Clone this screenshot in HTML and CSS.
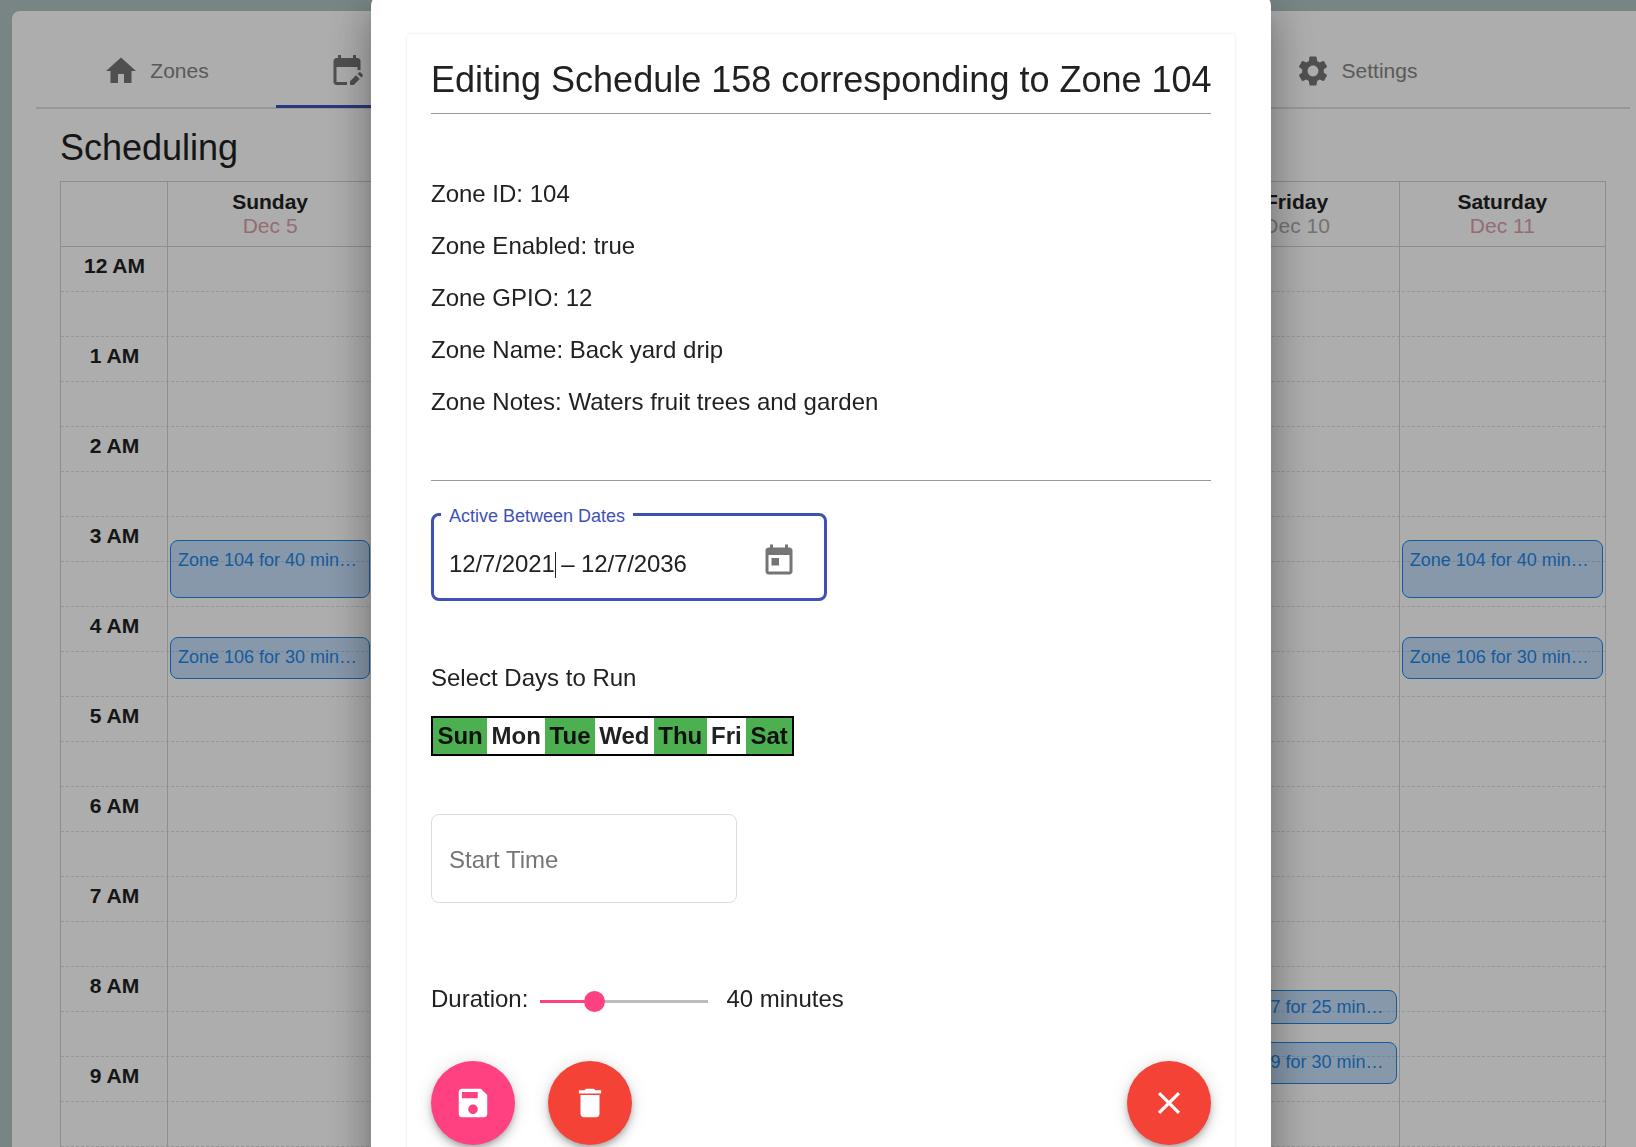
FILE: index.html
```html
<!DOCTYPE html>
<html lang="en">
  <head>
    <meta charset="UTF-8" />
    <meta name="viewport" content="width=device-width, initial-scale=1.0" />
    <title>Scheduling</title>
    <link rel="stylesheet" href="styles.css">
  </head>
  <body>
    <div class="page-card">
      <nav class="tabs">
        <a class="tab">
          <svg class="tab-icon" viewBox="0 0 24 24"><path d="M10 20v-6h4v6h5v-8h3L12 3 2 12h3v8z"/></svg>
          <span>Zones</span>
        </a>
        <a class="tab tab-active">
          <svg class="tab-icon" viewBox="0 0 24 24"><path d="M5 10h14v2h2V6c0-1.1-.9-2-2-2h-1V2h-2v2H8V2H6v2H5c-1.1 0-2 .9-2 2v14c0 1.1.9 2 2 2h7v-2H5V10zM22.29 14.84l-1.06-1.06c-.39-.39-1.02-.39-1.41 0l-.78.78 2.47 2.47.78-.78c.39-.39.39-1.02 0-1.41zM14 19.53V22h2.47l4-4-2.47-2.47-4 4z"/></svg>
          <span>Schedule</span>
        </a>
        <div class="tab-gap"></div>
        <a class="tab">
          <svg class="tab-icon" viewBox="0 0 24 24"><path d="M19.14 12.94c.04-.3.06-.61.06-.94 0-.32-.02-.64-.07-.94l2.03-1.58c.18-.14.23-.41.12-.61l-1.92-3.32c-.12-.22-.37-.29-.59-.22l-2.39.96c-.5-.38-1.03-.7-1.62-.94l-.36-2.54c-.04-.24-.24-.41-.48-.41h-3.84c-.24 0-.43.17-.47.41l-.36 2.54c-.59.24-1.13.57-1.62.94l-2.39-.96c-.22-.08-.47 0-.59.22L2.74 8.87c-.12.21-.08.47.12.61l2.03 1.58c-.05.3-.09.63-.09.94s.02.64.07.94l-2.03 1.58c-.18.14-.23.41-.12.61l1.92 3.32c.12.22.37.29.59.22l2.39-.96c.5.38 1.03.7 1.62.94l.36 2.54c.05.24.24.41.48.41h3.84c.24 0 .44-.17.47-.41l.36-2.54c.59-.24 1.13-.56 1.62-.94l2.39.96c.22.08.47 0 .59-.22l1.92-3.32c.12-.22.07-.47-.12-.61l-2.01-1.58zM12 15.6c-1.98 0-3.6-1.62-3.6-3.6s1.62-3.6 3.6-3.6 3.6 1.62 3.6 3.6-1.62 3.6-3.6 3.6z"/></svg>
          <span>Settings</span>
        </a>
      </nav>

      <section class="schedule">
        <h1 class="schedule-title">Scheduling</h1>
        <div class="calendar">
          <div class="cal-head">
            <div class="cal-head-cell"></div>
            <div class="cal-head-cell"><b>Sunday</b><span class="weekend">Dec 5</span></div>
            <div class="cal-head-cell"><b>Monday</b><span>Dec 6</span></div>
            <div class="cal-head-cell"><b>Tuesday</b><span>Dec 7</span></div>
            <div class="cal-head-cell"><b>Wednesday</b><span>Dec 8</span></div>
            <div class="cal-head-cell"><b>Thursday</b><span>Dec 9</span></div>
            <div class="cal-head-cell"><b>Friday</b><span>Dec 10</span></div>
            <div class="cal-head-cell"><b>Saturday</b><span class="weekend">Dec 11</span></div>
          </div>
          <div class="cal-body">
            <div class="slot">12 AM</div><div class="slot"></div>
            <div class="slot">1 AM</div><div class="slot"></div>
            <div class="slot">2 AM</div><div class="slot"></div>
            <div class="slot">3 AM</div><div class="slot"></div>
            <div class="slot">4 AM</div><div class="slot"></div>
            <div class="slot">5 AM</div><div class="slot"></div>
            <div class="slot">6 AM</div><div class="slot"></div>
            <div class="slot">7 AM</div><div class="slot"></div>
            <div class="slot">8 AM</div><div class="slot"></div>
            <div class="slot">9 AM</div><div class="slot"></div>
            <div class="cal-cols">
              <div class="cal-col"></div>
              <div class="cal-col">
                <div class="event event-a">Zone 104 for 40 minutes</div>
                <div class="event event-b">Zone 106 for 30 minutes</div>
              </div>
              <div class="cal-col"></div>
              <div class="cal-col"></div>
              <div class="cal-col"></div>
              <div class="cal-col"></div>
              <div class="cal-col">
                <div class="event event-c">Zone 107 for 25 minutes</div>
                <div class="event event-d">Zone 109 for 30 minutes</div>
              </div>
              <div class="cal-col">
                <div class="event event-a">Zone 104 for 40 minutes</div>
                <div class="event event-b">Zone 106 for 30 minutes</div>
              </div>
            </div>
          </div>
        </div>
      </section>
    </div>

    <div class="backdrop"></div>

    <div class="modal">
      <div class="modal-paper">
        <h2 class="modal-title">Editing Schedule 158 corresponding to Zone 104</h2>

        <div class="zone-info">
          <p>Zone ID: 104</p>
          <p>Zone Enabled: true</p>
          <p>Zone GPIO: 12</p>
          <p>Zone Name: Back yard drip</p>
          <p>Zone Notes: Waters fruit trees and garden</p>
        </div>
        <hr class="rule" />

        <div class="date-field">
          <label class="date-label">Active Between Dates</label>
          <div class="date-value">12/7/2021<i class="caret"></i> – 12/7/2036</div>
          <svg class="date-icon" viewBox="0 0 24 24"><path d="M19 3h-1V1h-2v2H8V1H6v2H5c-1.11 0-1.99.9-1.99 2L3 19c0 1.1.89 2 2 2h14c1.1 0 2-.9 2-2V5c0-1.1-.9-2-2-2zm0 16H5V8h14v11zM7 10h5v5H7z"/></svg>
        </div>

        <p class="days-label">Select Days to Run</p>
        <div class="days">
          <span class="day day-on">Sun</span>
          <span class="day">Mon</span>
          <span class="day day-on">Tue</span>
          <span class="day">Wed</span>
          <span class="day day-on">Thu</span>
          <span class="day">Fri</span>
          <span class="day day-on">Sat</span>
        </div>

        <div class="time-field">Start Time</div>

        <div class="duration">
          <span>Duration:</span>
          <div class="slider">
            <div class="slider-fill" style="width: 32.7%"><span class="slider-thumb"></span></div>
          </div>
          <span class="duration-value">40 minutes</span>
        </div>

        <div class="actions">
          <button class="fab fab-save" type="button">
            <svg viewBox="0 0 24 24"><path d="M17 3H5c-1.11 0-2 .9-2 2v14c0 1.1.89 2 2 2h14c1.1 0 2-.9 2-2V7l-4-4zm-5 16c-1.66 0-3-1.34-3-3s1.34-3 3-3 3 1.34 3 3-1.34 3-3 3zm3-10H5V5h10v4z"/></svg>
          </button>
          <button class="fab fab-red" type="button">
            <svg viewBox="0 0 24 24"><path d="M6 19c0 1.1.9 2 2 2h8c1.1 0 2-.9 2-2V7H6v12zM19 4h-3.5l-1-1h-5l-1 1H5v2h14V4z"/></svg>
          </button>
          <button class="fab fab-red fab-close" type="button">
            <svg viewBox="0 0 24 24"><path d="M19 6.41L17.59 5 12 10.59 6.41 5 5 6.41 10.59 12 5 17.59 6.41 19 12 13.41 17.59 19 19 17.59 13.41 12z"/></svg>
          </button>
        </div>
      </div>
    </div>
  </body>
</html>
```

FILE: styles.css
```css
* {
  box-sizing: border-box;
}

html,
body {
  height: 100%;
}

body {
  margin: 0;
  overflow: hidden;
  background-color: #b3c5c5;
  font-family: "Liberation Sans", Arial, sans-serif;
  color: #212121;
}

/* page behind the dialog */
.page-card {
  margin: 11px 0 0 12px;
  padding: 25px 6px 0 24px;
  height: 1200px;
  background-color: #fff;
  border-radius: 8px 0 0 0;
}

.tabs {
  display: flex;
  height: 73px;
  border-bottom: 2px solid #e0e0e0;
}

.tab {
  width: 240px;
  height: 72px;
  padding-bottom: 2px;
  display: flex;
  align-items: center;
  justify-content: center;
  gap: 11px;
  font-size: 21px;
  color: #858585;
}

.tab-active {
  border-bottom: 3px solid #3f51b5;
}

.tab-gap {
  width: 720px;
}

.tab-icon {
  width: 36px;
  height: 36px;
  fill: #757575;
}

.schedule {
  padding: 0 24px;
}

.schedule-title {
  margin: 17px 0 11px;
  font-size: 36px;
  line-height: 44px;
  font-weight: 400;
}

.calendar {
  border-top: 1px solid #d0d0d0;
  border-left: 1px solid #d0d0d0;
  border-right: 1px solid #d0d0d0;
}

.cal-head {
  display: grid;
  grid-template-columns: 107px repeat(7, 1fr);
  height: 65px;
  border-bottom: 1px solid #d0d0d0;
}

.cal-head-cell {
  padding-top: 8px;
  text-align: center;
  font-size: 21px;
  line-height: 24px;
  border-right: 1px solid #d0d0d0;
}

.cal-head-cell:last-child {
  border-right: none;
}

.cal-head-cell b,
.cal-head-cell span {
  display: block;
}

.cal-head-cell span {
  color: #aaa;
}

.cal-head-cell .weekend {
  color: #dca0aa;
}

.cal-body {
  position: relative;
}

.slot {
  display: flex;
  justify-content: center;
  height: 45px;
  padding-right: calc(100% - 107px);
  border-bottom: 1px dashed #ddd;
  font-size: 21px;
  font-weight: 700;
  line-height: 37px;
}

.cal-cols {
  position: absolute;
  top: 0;
  left: 0;
  right: 0;
  bottom: 0;
  display: grid;
  grid-template-columns: 107px repeat(7, 1fr);
}

.cal-col {
  position: relative;
  border-right: 1px solid #d0d0d0;
}

.cal-col:last-child {
  border-right: none;
}

.event {
  position: absolute;
  left: 2px;
  right: 2px;
  padding: 5px 7px 0;
  font-size: 18px;
  line-height: 28px;
  color: #1e88e5;
  background-color: rgba(33, 130, 243, 0.25);
  border: 1px solid #1e88e5;
  border-radius: 8px;
  white-space: nowrap;
  overflow: hidden;
  text-overflow: ellipsis;
}

.event-a {
  top: 293px;
  height: 58px;
}

.event-b {
  top: 390px;
  height: 42px;
}

.event-c {
  top: 743px;
  height: 34px;
  padding-top: 2px;
}

.event-d {
  top: 795px;
  height: 42px;
}

.backdrop {
  position: fixed;
  top: 0;
  left: 0;
  right: 0;
  bottom: 0;
  background-color: rgba(0, 0, 0, 0.32);
}

/* dialog */
.modal {
  position: fixed;
  top: -6px;
  left: 371px;
  width: 900px;
  height: 1300px;
  padding: 40px 36px 0;
  background-color: #fff;
  border-radius: 12px;
  box-shadow: 0 11px 15px -7px rgba(0, 0, 0, 0.2), 0 24px 38px 3px rgba(0, 0, 0, 0.18), 0 9px 46px 8px rgba(0, 0, 0, 0.16);
}

.modal-paper {
  height: 1260px;
  padding: 20px 24px 0;
  border-radius: 4px;
  box-shadow: 0 0 3px rgba(0, 0, 0, 0.12);
}

.modal-title {
  margin: 0;
  padding-bottom: 7px;
  font-size: 36px;
  line-height: 52px;
  font-weight: 400;
  white-space: nowrap;
  border-bottom: 1px solid #999;
}

.zone-info {
  margin-top: 66px;
}

.zone-info p {
  margin: 0 0 24px;
  font-size: 24px;
  line-height: 28px;
}

.rule {
  margin: 64px 0 0;
  border: none;
  border-top: 1px solid #999;
}

.date-field {
  position: relative;
  display: flex;
  align-items: center;
  justify-content: space-between;
  width: 396px;
  height: 88px;
  margin-top: 32px;
  padding: 0 27px 0 15px;
  border: 3px solid #3f51b5;
  border-radius: 8px;
}

.date-label {
  position: absolute;
  top: -11px;
  left: 7px;
  padding: 0 8px;
  font-size: 18px;
  line-height: 22px;
  color: #3f51b5;
  background-color: #fff;
}

.date-value {
  margin-top: 14px;
  font-size: 24px;
  line-height: 28px;
  letter-spacing: -0.12px;
  white-space: nowrap;
}

.caret {
  display: inline-block;
  width: 1px;
  height: 26px;
  margin-right: -1px;
  vertical-align: -6px;
  background-color: #212121;
}

.date-icon {
  width: 36px;
  height: 36px;
  margin-top: 8px;
  fill: #757575;
}

.days-label {
  margin: 63px 0 0;
  font-size: 24px;
  line-height: 28px;
}

.days {
  display: inline-flex;
  margin-top: 24px;
  border: 2px solid #000;
}

.day {
  padding: 0 4.4px;
  font-size: 24px;
  font-weight: 700;
  line-height: 36px;
}

.day-on {
  background-color: #4caf50;
  color: #111;
}

.time-field {
  width: 306px;
  height: 89px;
  margin-top: 58px;
  padding-left: 17px;
  border: 1px solid #ddd;
  border-radius: 8px;
  font-size: 24px;
  line-height: 89px;
  color: #757575;
}

.duration {
  display: flex;
  align-items: center;
  height: 28px;
  margin-top: 82px;
  font-size: 24px;
}

.slider {
  width: 168px;
  height: 3px;
  margin: 4px 18px 0 12px;
  background-color: #bdbdbd;
}

.slider-fill {
  position: relative;
  height: 3px;
  background-color: #ff4081;
}

.slider-thumb {
  position: absolute;
  top: -9px;
  right: -10px;
  width: 21px;
  height: 21px;
  border-radius: 50%;
  background-color: #ff4081;
}

.actions {
  display: flex;
  gap: 33px;
  margin-top: 48px;
}

.fab {
  display: flex;
  align-items: center;
  justify-content: center;
  width: 84px;
  height: 84px;
  padding: 0;
  border: none;
  border-radius: 50%;
  box-shadow: 0 3px 5px -1px rgba(0, 0, 0, 0.2), 0 6px 10px 0 rgba(0, 0, 0, 0.14), 0 1px 18px 0 rgba(0, 0, 0, 0.12);
}

.fab svg {
  width: 38px;
  height: 38px;
  fill: #fff;
}

.fab-save {
  background-color: #ff4081;
}

.fab-red {
  background-color: #f44336;
}

.fab-close {
  margin-left: auto;
}
```
